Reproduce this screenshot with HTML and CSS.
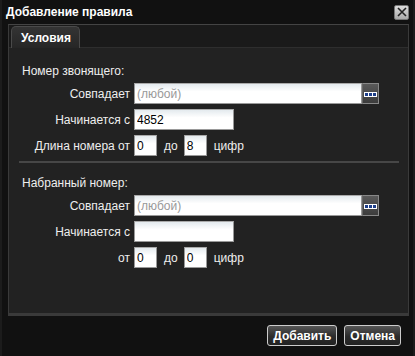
FILE: index.html
```html
<!DOCTYPE html>
<html>
	<head>
		<meta charset="UTF-8">
		<title>Добавление правила</title>
		<link rel="stylesheet" href="styles.css">
	</head>
	<body>
		<div class='window'>
			<div class='titlebar'>
				<span class='title'>Добавление правила</span>
				<span class='close'>
					<svg width="12" height="12" viewBox="0 0 12 12"><path d="M2 2 L10 10 M10 2 L2 10" stroke="#222" stroke-width="1.6"/></svg>
				</span>
			</div>
			<div class='tabs'>
				<div class='tabbar'>
					<span class='tab'>Условия</span>
				</div>
				<div class='panel'>
					<div class='section'>
						<div class='heading'>Номер звонящего:</div>
						<div class='row'>
							<label>Совпадает</label>
							<span class='combo'><input type='text' placeholder='(любой)'><span class='pick'><i></i><i></i><i></i></span></span>
						</div>
						<div class='row'>
							<label>Начинается с</label>
							<input class='mid' type='text' value='4852'>
						</div>
						<div class='row'>
							<label>Длина номера от</label>
							<input class='small' type='text' value='0'>
							<span class='word'>до</span>
							<input class='small' type='text' value='8'>
							<span class='word'>цифр</span>
						</div>
					</div>
					<div class='sep'></div>
					<div class='section'>
						<div class='heading'>Набранный номер:</div>
						<div class='row'>
							<label>Совпадает</label>
							<span class='combo'><input type='text' placeholder='(любой)'><span class='pick'><i></i><i></i><i></i></span></span>
						</div>
						<div class='row'>
							<label>Начинается с</label>
							<input class='mid' type='text' value=''>
						</div>
						<div class='row'>
							<label>от</label>
							<input class='small' type='text' value='0'>
							<span class='word'>до</span>
							<input class='small' type='text' value='0'>
							<span class='word'>цифр</span>
						</div>
					</div>
				</div>
			</div>
			<div class='buttons'>
				<button type='button'>Добавить</button>
				<button type='button'>Отмена</button>
			</div>
		</div>
	</body>
</html>
```
FILE: styles.css
```css
*{
	box-sizing:border-box;
}
body{
	margin:0;
	background-color:#111;
	font-family:"Liberation Sans",Arial,sans-serif;
	font-size:12px;
	color:#eee;
}
.window{
	width:415px;
	height:356px;
	border-left:2px solid #1c1c1c;
	border-right:2px solid #1c1c1c;
}
.titlebar{
	height:24px;
	display:flex;
	align-items:center;
	justify-content:space-between;
	padding:0 4px 0 4px;
}
.title{
	font-weight:bold;
	font-size:12px;
	color:#fff;
}
.close{
	width:15px;
	height:15px;
	background:linear-gradient(#ddd,#aaa);
	border:1px solid #777;
	border-radius:2px;
	display:flex;
	align-items:center;
	justify-content:center;
}
.tabs{
	margin:0 4px 0 6px;
	border:1px solid #3a3a3a;
	border-top-color:#444;
}
.tabbar{
	height:23px;
	background-color:#1a1a1a;
	border-bottom:1px solid #2e2e2e;
	padding:1px 0 0 2px;
	display:flex;
	align-items:flex-end;
}
.tab{
	height:22px;
	margin-bottom:-1px;
	padding:0 8px 0 9px;
	display:flex;
	align-items:center;
	font-weight:bold;
	color:#fff;
	background:linear-gradient(#343434,#262626);
	border:1px solid #4a4a4a;
	border-bottom:none;
	border-radius:5px 5px 0 0;
}
.panel{
	height:267px;
	background-color:#222;
	padding:12px 10px 0 13px;
	border-bottom:2px solid #3a3a3a;
}
.heading{
	height:22px;
	line-height:22px;
	color:#eee;
	margin-bottom:1px;
}
.row{
	display:flex;
	align-items:center;
	height:21px;
	margin-bottom:5px;
}
.row label{
	width:112px;
	text-align:right;
	padding-right:4px;
	color:#eee;
}
input{
	height:21px;
	border:1px solid #999;
	border-top-color:#aaa;
	background:linear-gradient(#e4eaee,#fff 40%);
	font-family:"Liberation Sans",Arial,sans-serif;
	font-size:12px;
	color:#000;
	padding:1px 2px 0 2px;
	outline:none;
}
input::placeholder{
	color:#999;
}
.combo{
	display:flex;
	width:245px;
	height:21px;
}
.combo input{
	flex:1;
	min-width:0;
}
.pick{
	width:17px;
	height:21px;
	background:linear-gradient(#5a5a5a,#3c3c3c);
	border:1px solid #888;
	border-left:1px solid #666;
	display:flex;
	align-items:center;
	justify-content:center;
	gap:1px;
	padding-top:2px;
}
.pick i{
	width:3px;
	height:3px;
	background-color:#1e3f8a;
	box-shadow:0 0 0 1px #fff;
}
.mid{
	width:100px;
}
.small{
	width:23px;
}
.word{
	padding:0 6px 0 7px;
	color:#eee;
}
.sep{
	height:2px;
	background-color:#474747;
	margin:5px 0 9px -3px;
	width:380px;
}
.buttons{
	display:flex;
	justify-content:flex-end;
	gap:7px;
	padding:9px 12px 0 0;
}
button{
	height:21px;
	padding:0 5px;
	font-family:"Liberation Sans",Arial,sans-serif;
	font-size:12px;
	font-weight:bold;
	color:#fff;
	background:linear-gradient(#555,#2c2c2c 55%,#222);
	border:1px solid #ccc;
	border-radius:3px;
}
```
